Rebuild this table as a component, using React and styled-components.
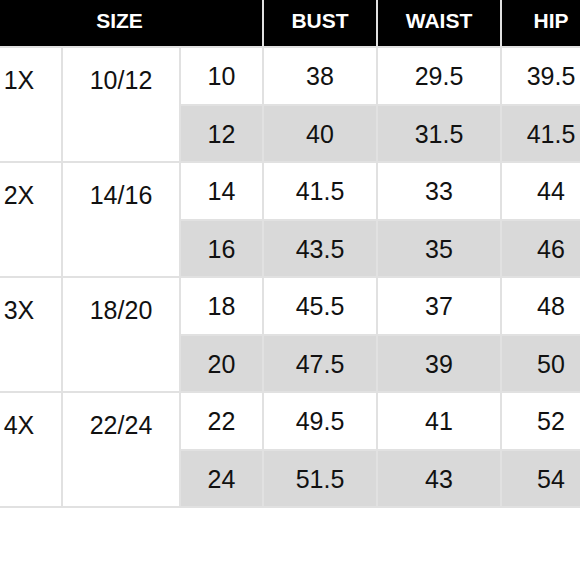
import React from "react";
import styled, { createGlobalStyle } from "styled-components";

const GlobalStyle = createGlobalStyle`
  html, body {
    margin: 0;
    padding: 0;
    background: #ffffff;
  }
  body {
    font-family: "Liberation Sans", Arial, sans-serif;
  }
`;

const Page = styled.div`
  width: 580px;
  height: 580px;
  overflow: hidden;
  background: #ffffff;
`;

const Table = styled.div`
  display: grid;
  grid-template-columns: 84px 116px 81px 112px 122px 98px;
  grid-template-rows: 46px repeat(4, 56px 55px);
  gap: 2px;
  width: 623px;
  margin-left: -23px;
  background: #e1e1e1;
  border-bottom: 2px solid #e1e1e1;
`;

const HeadCell = styled.div`
  grid-column: ${(p) => p.$span || "auto"};
  background: #000000;
  color: #ffffff;
  font-weight: 700;
  font-size: 21px;
  display: flex;
  align-items: center;
  justify-content: center;
  padding-bottom: 4px;
  box-sizing: border-box;
`;

const Label = styled.div`
  grid-row: span 2;
  background: #ffffff;
  color: #111111;
  font-size: 25px;
  line-height: 28px;
  text-align: center;
  padding-top: 18px;
  box-sizing: border-box;
`;

const Cell = styled.div`
  background: ${(p) => (p.$shade ? "#d9d9d9" : "#ffffff")};
  color: #111111;
  font-size: 25px;
  line-height: 28px;
  display: flex;
  align-items: center;
  justify-content: center;
`;

const groups = [
  { plus: "1X", size: "10/12", rows: [["10", "38", "29.5", "39.5"], ["12", "40", "31.5", "41.5"]] },
  { plus: "2X", size: "14/16", rows: [["14", "41.5", "33", "44"], ["16", "43.5", "35", "46"]] },
  { plus: "3X", size: "18/20", rows: [["18", "45.5", "37", "48"], ["20", "47.5", "39", "50"]] },
  { plus: "4X", size: "22/24", rows: [["22", "49.5", "41", "52"], ["24", "51.5", "43", "54"]] },
];

export default function App() {
  return (
    <Page>
      <GlobalStyle />
      <Table>
        <HeadCell $span="span 3">SIZE</HeadCell>
        <HeadCell>BUST</HeadCell>
        <HeadCell>WAIST</HeadCell>
        <HeadCell>HIP</HeadCell>
        {groups.map((g) => (
          <React.Fragment key={g.plus}>
            <Label>{g.plus}</Label>
            <Label>{g.size}</Label>
            {g.rows[0].map((v, i) => (
              <Cell key={"a" + i}>{v}</Cell>
            ))}
            {g.rows[1].map((v, i) => (
              <Cell key={"b" + i} $shade>
                {v}
              </Cell>
            ))}
          </React.Fragment>
        ))}
      </Table>
    </Page>
  );
}
